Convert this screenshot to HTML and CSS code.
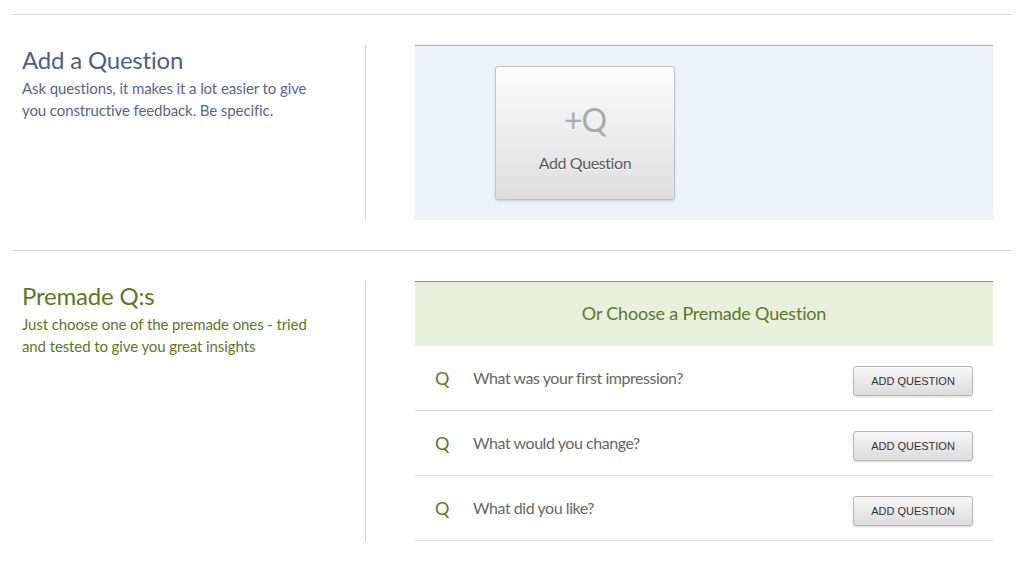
FILE: index.html
```html
<!DOCTYPE html>
<html>
<head>
<meta charset="utf-8">
<link rel="stylesheet" href="styles.css">
</head>
<body>
<div class="page">
  <section class="section">
    <div class="intro">
      <h2 class="title title-blue">Add a Question</h2>
      <p class="desc desc-blue">Ask questions, it makes it a lot easier to give you constructive feedback. Be specific.</p>
    </div>
    <div class="panel panel-blue">
      <button class="big-btn" type="button">
        <span class="big-icon">+Q</span>
        <span class="big-label">Add Question</span>
      </button>
    </div>
  </section>
  <section class="section">
    <div class="intro">
      <h2 class="title title-green">Premade Q:s</h2>
      <p class="desc desc-green">Just choose one of the premade ones - tried and tested to give you great insights</p>
    </div>
    <div class="panel panel-list">
      <div class="list-head">Or Choose a Premade Question</div>
      <div class="row">
        <span class="q">Q</span>
        <span class="row-text">What was your first impression?</span>
        <button class="small-btn" type="button">ADD QUESTION</button>
      </div>
      <div class="row">
        <span class="q">Q</span>
        <span class="row-text">What would you change?</span>
        <button class="small-btn" type="button">ADD QUESTION</button>
      </div>
      <div class="row">
        <span class="q">Q</span>
        <span class="row-text">What did you like?</span>
        <button class="small-btn" type="button">ADD QUESTION</button>
      </div>
    </div>
  </section>
</div>
</body>
</html>
```

FILE: styles.css
```css
* { box-sizing: border-box; }
html, body { margin: 0; padding: 0; background: #fff; }
body { font-family: Lato, "Open Sans", sans-serif; }
.page { padding: 14px 23px 0 12px; }
.section {
  border-top: 1px solid #d9d9d9;
  padding: 30px 0 30px 0;
  display: flex;
  align-items: flex-start;
}
.intro {
  width: 354px;
  padding: 0 54px 0 10px;
  border-right: 1px solid #cfcfcf;
  align-self: stretch;
}
.title {
  margin: 0;
  font-weight: 400;
  font-size: 24px;
  line-height: 30px;
  letter-spacing: -0.2px;
}
.title-blue { color: #4f5f7f; }
.title-green { color: #5b7a1b; }
.desc {
  margin: 2px 0 0 0;
  font-size: 15px;
  line-height: 22px;
  letter-spacing: -0.1px;
}
.desc-blue { color: #56668a; }
.desc-green { color: #5b7a1b; }
.panel {
  margin-left: 49px;
  width: 578px;
}
.panel-blue {
  border-top: 1px solid #9fabc0;
  background: #edf1f8;
  height: 175px;
  padding: 20px 0 0 80px;
}
.big-btn {
  width: 180px;
  height: 134px;
  border: 1px solid #c2c2c2;
  border-radius: 3px;
  background: linear-gradient(#fcfcfc, #dedede);
  box-shadow: 0 1px 2px rgba(0,0,0,0.15);
  display: flex;
  flex-direction: column;
  align-items: center;
  padding: 35px 0 0 0;
  font-family: Lato, sans-serif;
  cursor: pointer;
}
.big-icon {
  font-size: 32px;
  line-height: 36px;
  font-weight: 400;
  color: #ababab;
  letter-spacing: -1px;
}
.big-label {
  margin-top: 15px;
  font-size: 16px;
  line-height: 20px;
  color: #5a5a5a;
  letter-spacing: -0.4px;
  text-shadow: 0 1px 0 #fff;
}
.list-head {
  border-top: 1px solid #8a9a5c;
  background: #e9efdd;
  height: 65px;
  display: flex;
  align-items: center;
  justify-content: center;
  font-size: 18px;
  color: #5b7a1b;
  letter-spacing: -0.2px;
  padding-bottom: 2px;
}
.row {
  height: 65px;
  border-bottom: 1px solid #dcdcdc;
  display: flex;
  align-items: center;
  padding: 0 20px 0 20px;
}
.q {
  width: 38px;
  font-size: 18px;
  color: #5b7a1b;
}
.row-text {
  flex: 1;
  font-size: 16px;
  color: #666;
  letter-spacing: -0.45px;
  margin-top: -1px;
}
.small-btn {
  width: 120px;
  height: 30px;
  margin-top: 6px;
  border: 1px solid #b5b5b5;
  border-radius: 3px;
  background: linear-gradient(#f7f7f7, #dcdcdc);
  box-shadow: 0 1px 2px rgba(0,0,0,0.15);
  font-family: "Liberation Sans", Arial, sans-serif;
  font-size: 11px;
  color: #333;
  padding: 0;
  cursor: pointer;
}
```
